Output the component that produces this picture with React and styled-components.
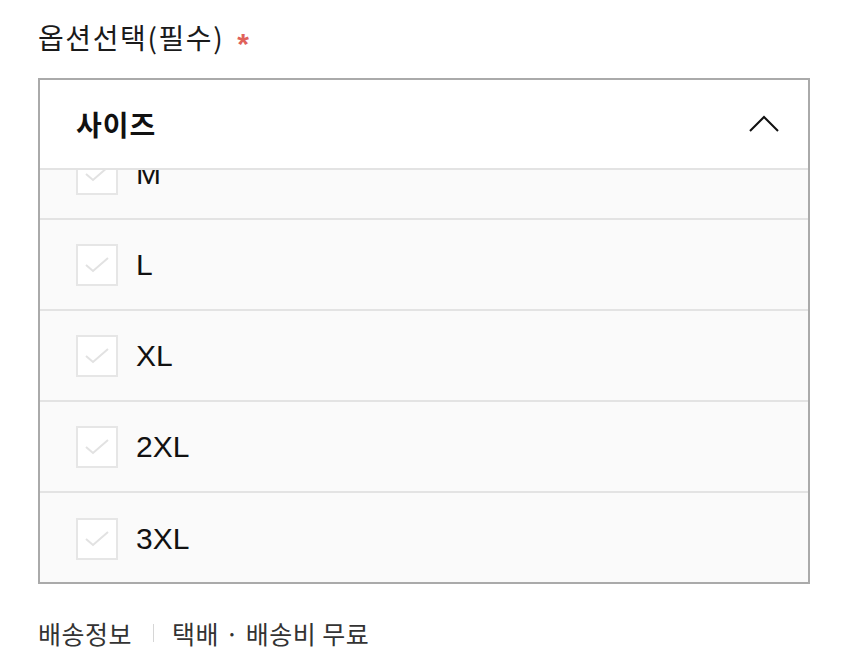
import React, { useEffect, useRef } from 'react'
import styled, { createGlobalStyle } from 'styled-components'

const GlobalStyle = createGlobalStyle`
  html, body {
    margin: 0;
    padding: 0;
    background: #ffffff;
  }
  body {
    font-family: "Liberation Sans", "Noto Sans CJK KR", sans-serif;
    color: #111;
  }
`

const Page = styled.div`
  width: 849px;
  height: 665px;
  padding: 19px 38px 0 38px;
  box-sizing: border-box;
`

const Title = styled.div`
  height: 36px;
  display: flex;
  align-items: center;
`

const TitleText = styled.span`
  font-family: "Noto Sans CJK KR", sans-serif;
  font-size: 28px;
  letter-spacing: 1.6px;
  line-height: 36px;
  color: #1a1a1a;
`

const Required = styled.span`
  font-family: "Liberation Sans", sans-serif;
  color: #e0625a;
  font-size: 30px;
  font-weight: 700;
  line-height: 36px;
  margin-left: 13px;
  position: relative;
  top: 7px;
`

const Box = styled.div`
  margin-top: 23px;
  width: 772px;
  height: 506px;
  box-sizing: border-box;
  border: 2px solid #aaaaaa;
  display: flex;
  flex-direction: column;
`

const Header = styled.div`
  flex: 0 0 90px;
  box-sizing: border-box;
  border-bottom: 2px solid #e3e3e3;
  display: flex;
  align-items: center;
  justify-content: space-between;
  padding: 0 28px 0 36px;
  background: #fff;
`

const HeaderLabel = styled.span`
  font-family: "Noto Sans CJK KR", sans-serif;
  font-size: 28px;
  letter-spacing: 1px;
  font-weight: 700;
  color: #111;
`

const List = styled.div`
  flex: 1;
  overflow: hidden;
  background: #fafafa;
`

const Row = styled.div`
  height: 91px;
  box-sizing: border-box;
  border-bottom: ${p => (p.last ? 'none' : '2px solid #e3e3e3')};
  display: flex;
  align-items: center;
  padding-left: 36px;
  gap: 18px;
`

const Check = styled.span`
  width: 42px;
  height: 42px;
  box-sizing: border-box;
  border: 2px solid #e6e6e6;
  background: #fff;
  display: flex;
  align-items: center;
  justify-content: center;
`

const Label = styled.span`
  font-size: 30px;
  color: #111;
`

const Footer = styled.div`
  margin-top: 31px;
  display: flex;
  align-items: center;
  font-family: "Noto Sans CJK KR", sans-serif;
  font-size: 25px;
  letter-spacing: 0.5px;
  color: #333;
`

const Divider = styled.span`
  width: 1px;
  height: 18px;
  background: #d6d6d6;
  margin: 0 18px 0 21px;
`

const sizes = ['M', 'L', 'XL', '2XL', '3XL']

export default function App() {
  const listRef = useRef(null)
  useEffect(() => {
    if (listRef.current) listRef.current.scrollTop = 41
  }, [])

  return (
    <>
      <GlobalStyle />
      <Page>
        <Title>
          <TitleText>옵션선택(필수)</TitleText>
          <Required>*</Required>
        </Title>
        <Box>
          <Header>
            <HeaderLabel>사이즈</HeaderLabel>
            <svg width="32" height="18" viewBox="0 0 32 18">
              <path d="M2 16 L16 2 L30 16" fill="none" stroke="#111" strokeWidth="2" />
            </svg>
          </Header>
          <List ref={listRef}>
            {sizes.map((s, i) => (
              <Row key={s} last={i === sizes.length - 1}>
                <Check>
                  <svg width="26" height="20" viewBox="0 0 26 20">
                    <path d="M2 10 L9 16 L24 3" fill="none" stroke="#e2e2e2" strokeWidth="2" />
                  </svg>
                </Check>
                <Label>{s}</Label>
              </Row>
            ))}
          </List>
        </Box>
        <Footer>
          <span>배송정보</span>
          <Divider />
          <span>택배 · 배송비 무료</span>
        </Footer>
      </Page>
    </>
  )
}
